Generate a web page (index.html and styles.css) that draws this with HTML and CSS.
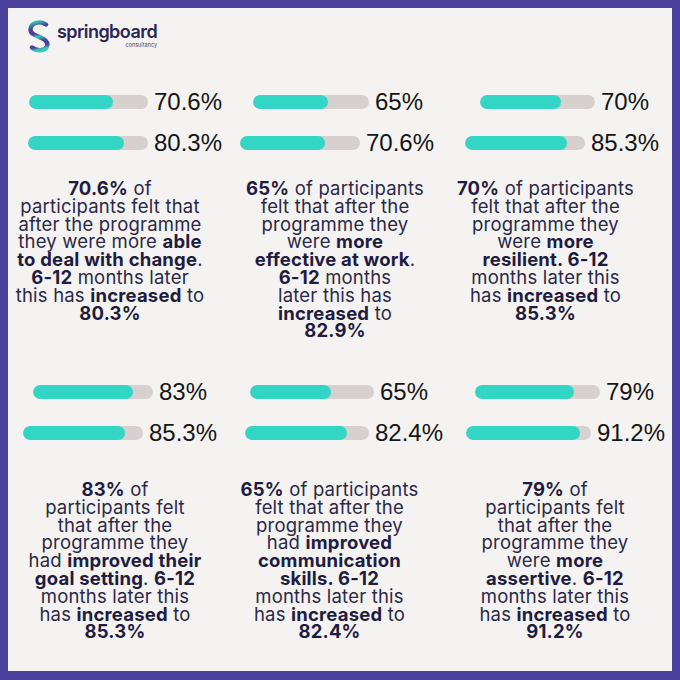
FILE: index.html
```html
<!DOCTYPE html>
<html lang="en">
<head>
<meta charset="utf-8">
<title>Springboard Consultancy – programme results</title>
<link rel="stylesheet" href="styles.css">
</head>
<body>
<div class="frame">
  <header class="logo">
    <svg class="logo-mark" width="24" height="33" viewBox="0 0 24 33" aria-hidden="true">
      <defs>
        <linearGradient id="sg" x1="0" y1="0" x2="0.3" y2="1">
          <stop offset="0" stop-color="#35cdb2"/>
          <stop offset="0.42" stop-color="#4a3f9c"/>
          <stop offset="0.78" stop-color="#4a3f9c"/>
          <stop offset="1" stop-color="#33c9b4"/>
        </linearGradient>
      </defs>
      <path d="M19 4.5 C 13 0.5, 3.5 2.5, 3.5 9.5 C 3.5 15, 10 15.5, 13.5 17.5" fill="none" stroke="url(#sg)" stroke-width="4.4" stroke-linecap="round"/>
      <path d="M13.5 17.5 C 18.5 19.5, 21.5 22, 20 26.5 C 18 31, 9.5 31.5, 5 27.5" fill="none" stroke="url(#sg)" stroke-width="4.4" stroke-linecap="round"/>
    </svg>
    <div class="logo-text">
      <span class="logo-name">springboard</span>
      <span class="logo-sub">consultancy</span>
    </div>
  </header>

  <main class="grid">
    <section class="cell row1 c11">
      <div class="bar-row b1"><div class="track"><div class="fill" style="width:70.6%"></div></div><span class="pct">70.6%</span></div>
      <div class="bar-row b2"><div class="track"><div class="fill" style="width:80.3%"></div></div><span class="pct">80.3%</span></div>
      <p class="desc"><b>70.6%</b> of<br>participants felt that<br>after the programme<br>they were more <b>able<br>to deal with change</b>.<br><b>6-12</b> months later<br>this has <b>increased</b> to<br><b>80.3%</b></p>
    </section>

    <section class="cell row1 c12">
      <div class="bar-row b1"><div class="track"><div class="fill" style="width:65%"></div></div><span class="pct">65%</span></div>
      <div class="bar-row b2"><div class="track"><div class="fill" style="width:70.6%"></div></div><span class="pct">70.6%</span></div>
      <p class="desc"><b>65%</b> of participants<br>felt that after the<br>programme they<br>were <b>more<br>effective at work</b>.<br><b>6-12</b> months<br>later this has<br><b>increased</b> to<br><b>82.9%</b></p>
    </section>

    <section class="cell row1 c13">
      <div class="bar-row b1"><div class="track"><div class="fill" style="width:70%"></div></div><span class="pct">70%</span></div>
      <div class="bar-row b2"><div class="track"><div class="fill" style="width:85.3%"></div></div><span class="pct">85.3%</span></div>
      <p class="desc"><b>70%</b> of participants<br>felt that after the<br>programme they<br>were <b>more<br>resilient. 6-12</b><br>months later this<br>has <b>increased</b> to<br><b>85.3%</b></p>
    </section>

    <section class="cell row2 c21">
      <div class="bar-row b1"><div class="track"><div class="fill" style="width:83%"></div></div><span class="pct">83%</span></div>
      <div class="bar-row b2"><div class="track"><div class="fill" style="width:85.3%"></div></div><span class="pct">85.3%</span></div>
      <p class="desc"><b>83%</b> of<br>participants felt<br>that after the<br>programme they<br>had <b>improved their<br>goal setting</b>. <b>6-12</b><br>months later this<br>has <b>increased</b> to<br><b>85.3%</b></p>
    </section>

    <section class="cell row2 c22">
      <div class="bar-row b1"><div class="track"><div class="fill" style="width:65%"></div></div><span class="pct">65%</span></div>
      <div class="bar-row b2"><div class="track"><div class="fill" style="width:82.4%"></div></div><span class="pct">82.4%</span></div>
      <p class="desc"><b>65%</b> of participants<br>felt that after the<br>programme they<br>had <b>improved<br>communication<br>skills. 6-12</b><br>months later this<br>has <b>increased</b> to<br><b>82.4%</b></p>
    </section>

    <section class="cell row2 c23">
      <div class="bar-row b1"><div class="track"><div class="fill" style="width:79%"></div></div><span class="pct">79%</span></div>
      <div class="bar-row b2"><div class="track"><div class="fill" style="width:91.2%"></div></div><span class="pct">91.2%</span></div>
      <p class="desc"><b>79%</b> of<br>participants felt<br>that after the<br>programme they<br>were <b>more<br>assertive</b>. <b>6-12</b><br>months later this<br>has <b>increased</b> to<br><b>91.2%</b></p>
    </section>
  </main>
</div>
</body>
</html>
```

FILE: styles.css
```css
* { box-sizing: border-box; }

html, body {
  margin: 0;
  padding: 0;
  background: #4b409c;
}

.frame {
  width: 680px;
  height: 680px;
  border: 8px solid #4b409c;
  border-bottom-width: 9px;
  background: #f4f3f1;
  overflow: hidden;
}

/* logo */
.logo {
  display: flex;
  align-items: flex-start;
  padding: 12px 0 0 19px;
  height: 44px;
}

.logo-mark {
  display: block;
  flex: none;
}

.logo-text {
  display: flex;
  flex-direction: column;
  align-items: flex-end;
  margin: 3px 0 0 6px;
}

.logo-name {
  font-family: Inter, "Noto Sans", sans-serif;
  font-weight: 600;
  font-size: 18px;
  line-height: 18px;
  letter-spacing: -0.55px;
  color: #2b2554;
}

.logo-sub {
  font-family: Inter, "Noto Sans", sans-serif;
  font-size: 5.5px;
  line-height: 6px;
  color: #4a4560;
  margin-top: 1px;
}

/* grid of results */
.grid {
  display: grid;
  grid-template-columns: repeat(3, 220px);
  grid-template-rows: 290px auto;
  column-gap: 2px;
  margin-top: 36px;
}

.cell {
  display: flex;
  flex-direction: column;
  align-items: flex-start;
}

.bar-row {
  display: flex;
  align-items: center;
  gap: 6px;
  height: 28px;
}

.bar-row + .bar-row { margin-top: 13px; }

.b1 { margin-left: var(--m1); }
.b2 { margin-left: var(--m2); }
.b1 .track { width: var(--w1); }
.b2 .track { width: var(--w2); }

.track {
  height: 14px;
  border-radius: 7px;
  background: #d6d1ce;
  overflow: hidden;
  flex: none;
}

.fill {
  height: 100%;
  border-radius: 7px;
  background: #33d6c4;
}

.pct {
  font-family: "Liberation Sans", Arial, sans-serif;
  font-size: 24px;
  line-height: 28px;
  color: #151515;
  white-space: nowrap;
}

.desc {
  align-self: stretch;
  margin: 23px 0 0 0;
  padding-right: var(--pr);
  font-family: Inter, "Noto Sans", sans-serif;
  font-size: 18.5px;
  line-height: 17.8px;
  letter-spacing: 0.2px;
  color: #2a2848;
  text-align: center;
  white-space: nowrap;
}

.row2 .desc { margin-top: 34px; }

.desc b {
  font-weight: 700;
  color: #1f1c40;
}

/* per-card placement */
.c11 { --m1: 21px; --m2: 20px; --w1: 119px; --w2: 120px; --pr: 16px; }
.c12 { --m1: 23px; --m2: 10px; --w1: 116px; --w2: 120px; --pr: 10px; }
.c13 { --m1: 28px; --m2: 13px; --w1: 115px; --w2: 120px; --pr: 33px; }
.c21 { --m1: 25px; --m2: 15px; --w1: 120px; --w2: 120px; --pr: 6px; }
.c22 { --m1: 20px; --m2: 15px; --w1: 124px; --w2: 124px; --pr: 21px; }
.c23 { --m1: 23px; --m2: 14px; --w1: 125px; --w2: 125px; --pr: 14px; }
```
